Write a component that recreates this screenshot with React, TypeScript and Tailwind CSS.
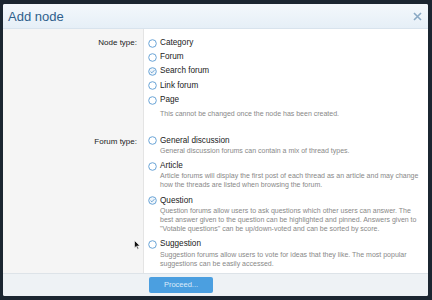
import React from "react";

type Opt = { label: string; checked?: boolean; desc?: string[] };

const nodeTypes: Opt[] = [
  { label: "Category" },
  { label: "Forum" },
  { label: "Search forum", checked: true },
  { label: "Link forum" },
  { label: "Page" },
];

const forumTypes: Opt[] = [
  {
    label: "General discussion",
    desc: ["General discussion forums can contain a mix of thread types."],
  },
  {
    label: "Article",
    desc: [
      "Article forums will display the first post of each thread as an article and may change",
      "how the threads are listed when browsing the forum.",
    ],
  },
  {
    label: "Question",
    checked: true,
    desc: [
      "Question forums allow users to ask questions which other users can answer. The",
      "best answer given to the question can be highlighted and pinned. Answers given to",
      "\"Votable questions\" can be up/down-voted and can be sorted by score.",
    ],
  },
  {
    label: "Suggestion",
    desc: [
      "Suggestion forums allow users to vote for ideas that they like. The most popular",
      "suggestions can be easily accessed.",
    ],
  },
];

function Radio({ checked }: { checked?: boolean }) {
  return (
    <svg width="9" height="9" viewBox="0 0 9 9" className="shrink-0">
      <circle
        cx="4.5"
        cy="4.5"
        r="3.8"
        fill={checked ? "#eef5fb" : "#ffffff"}
        stroke="#6aa4d6"
        strokeWidth="1"
      />
      {checked && (
        <path d="M2.6 4.6 L3.9 5.8 L6.4 3.2" fill="none" stroke="#5c97cc" strokeWidth="0.9" />
      )}
    </svg>
  );
}

export default function App() {
  return (
    <div
      className="w-[432px] h-[300px] overflow-hidden bg-[#1b2631] pt-[4px] pl-[3px] relative"
      style={{ fontFamily: '"Liberation Sans", Arial, sans-serif' }}
    >
      <div className="w-[425px] h-[292px] flex flex-col bg-white rounded-[2px] overflow-hidden">
        {/* header */}
        <div className="h-[25px] shrink-0 flex items-center justify-between pl-[5px] pr-[6px] bg-gradient-to-b from-[#f3f8fc] to-[#e6eff7] border-b border-[#d8e3ed]">
          <span className="text-[13px] text-[#2f5f8c] leading-none">Add node</span>
          <svg width="9" height="9" viewBox="0 0 9 9">
            <path d="M1 1 L8 8 M8 1 L1 8" stroke="#8aa9c4" strokeWidth="1.6" />
          </svg>
        </div>

        {/* body */}
        <div className="flex-1 grid grid-cols-[141px_1fr] min-h-0">
          <div className="bg-[#f5f5f5] border-r border-[#e4e4e4] pt-[7px] pr-[6px] text-right text-[8px] text-[#222]">
            <div className="leading-[14.25px]">Node type:</div>
            <div className="h-[86px]" />
            <div className="leading-[10px] mt-[1px]">Forum type:</div>
          </div>

          <div className="pt-[7px] pl-[4px] text-[#222]">
            {nodeTypes.map((o) => (
              <div key={o.label} className="flex items-center gap-[3px] h-[14.25px] text-[8.2px]">
                <Radio checked={o.checked} />
                <span>{o.label}</span>
              </div>
            ))}
            <div className="pl-[12px] mt-[1.5px] text-[7px] leading-[9px] text-[#888] whitespace-nowrap">
              This cannot be changed once the node has been created.
            </div>

            <div className="mt-[18px] flex flex-col gap-[6px]">
              {forumTypes.map((o) => (
                <div key={o.label}>
                  <div className="flex items-center gap-[3px] h-[10px] text-[8.2px] font-medium text-[#1a1a1a]">
                    <Radio checked={o.checked} />
                    <span>{o.label}</span>
                  </div>
                  <div className="pl-[12px] text-[7px] leading-[9.3px] text-[#888] whitespace-nowrap">
                    {o.desc?.map((l) => (
                      <div key={l}>{l}</div>
                    ))}
                  </div>
                </div>
              ))}
            </div>
          </div>
        </div>

        {/* footer */}
        <div className="h-[23px] shrink-0 bg-[#eef2f5] border-t border-[#dde3e8] flex items-start pt-[3px] pl-[146px]">
          <button className="w-[64px] h-[16px] rounded-[2px] bg-[#4b9fe0] text-[7.5px] text-[#dcecfa] leading-none">
            Proceed...
          </button>
        </div>
      </div>

      {/* mouse pointer */}
      <svg
        className="absolute left-[134px] top-[240px]"
        width="7"
        height="10"
        viewBox="0 0 7 10"
      >
        <path d="M0.5 0.5 L0.5 8 L2.3 6.3 L3.6 9.2 L4.7 8.7 L3.4 5.9 L6 5.9 Z" fill="#111" stroke="#fff" strokeWidth="0.6" />
      </svg>
    </div>
  );
}
